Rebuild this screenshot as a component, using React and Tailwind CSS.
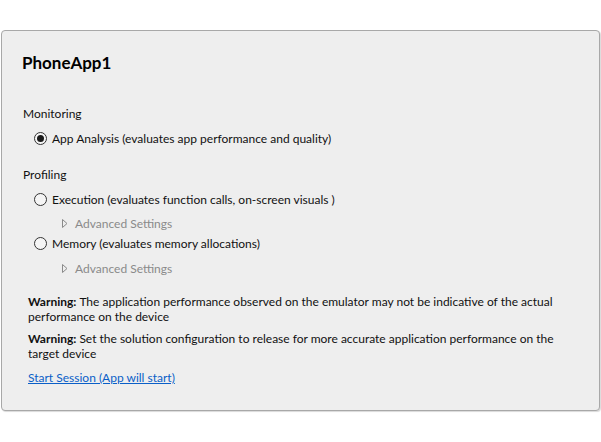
import React from "react";

function Radio({ checked }) {
  return (
    <span className="relative inline-flex h-[13px] w-[13px] shrink-0 items-center justify-center rounded-full border border-[#333333] bg-[#f5f5f5]">
      {checked && <span className="h-[7px] w-[7px] rounded-full bg-[#1a1a1a]" />}
    </span>
  );
}

function Adv() {
  return (
    <div className="flex items-center h-[16px] pl-[60px] text-[#8a8a8a]">
      <svg width="6" height="9" viewBox="0 0 6 9" className="mr-[7px]">
        <path d="M0.5 0.5 L5 4.5 L0.5 8.5 Z" fill="none" stroke="#8a8a8a" strokeWidth="1" />
      </svg>
      <span>Advanced Settings</span>
    </div>
  );
}

export default function App() {
  return (
    <div className="w-[601px] h-[442px] bg-white pt-[30px] pl-[1px]" style={{ fontFamily: 'Lato, "Noto Sans", sans-serif' }}>
      <div className="w-[599px] h-[381px] rounded-[4px] border border-[#a8a8a8] bg-[#eeeeee] shadow-[1px_1px_1px_rgba(0,0,0,0.15)] text-[12px] text-[#111111] leading-[15px]">
        <div className="pl-[20px] pt-[22px] text-[17px] font-bold leading-[20px] text-black">PhoneApp1</div>
        <div className="pl-[21px] mt-[33px] h-[16px]">Monitoring</div>
        <div className="flex items-center gap-[5px] pl-[32px] mt-[8px] h-[16px]">
          <Radio checked />
          <span>App Analysis (evaluates app performance and quality)</span>
        </div>
        <div className="pl-[21px] mt-[21px] h-[16px]">Profiling</div>
        <div className="flex items-center gap-[5px] pl-[32px] mt-[8px] h-[16px]">
          <Radio />
          <span>Execution (evaluates function calls, on-screen visuals )</span>
        </div>
        <div className="mt-[8px]"><Adv /></div>
        <div className="flex items-center gap-[5px] pl-[32px] mt-[4px] h-[16px]">
          <Radio />
          <span>Memory (evaluates memory allocations)</span>
        </div>
        <div className="mt-[9px]"><Adv /></div>
        <p className="pl-[26px] pr-[36px] mt-[18px]">
          <b className="font-bold">Warning: </b>The application performance observed on the emulator may not be indicative of the actual performance on the device
        </p>
        <p className="pl-[26px] pr-[36px] mt-[7px]">
          <b className="font-bold">Warning: </b>Set the solution configuration to release for more accurate application performance on the target device
        </p>
        <div className="pl-[26px] mt-[9px]">
          <a href="#" className="text-[#0a5fc8] underline">Start Session (App will start)</a>
        </div>
      </div>
    </div>
  );
}
